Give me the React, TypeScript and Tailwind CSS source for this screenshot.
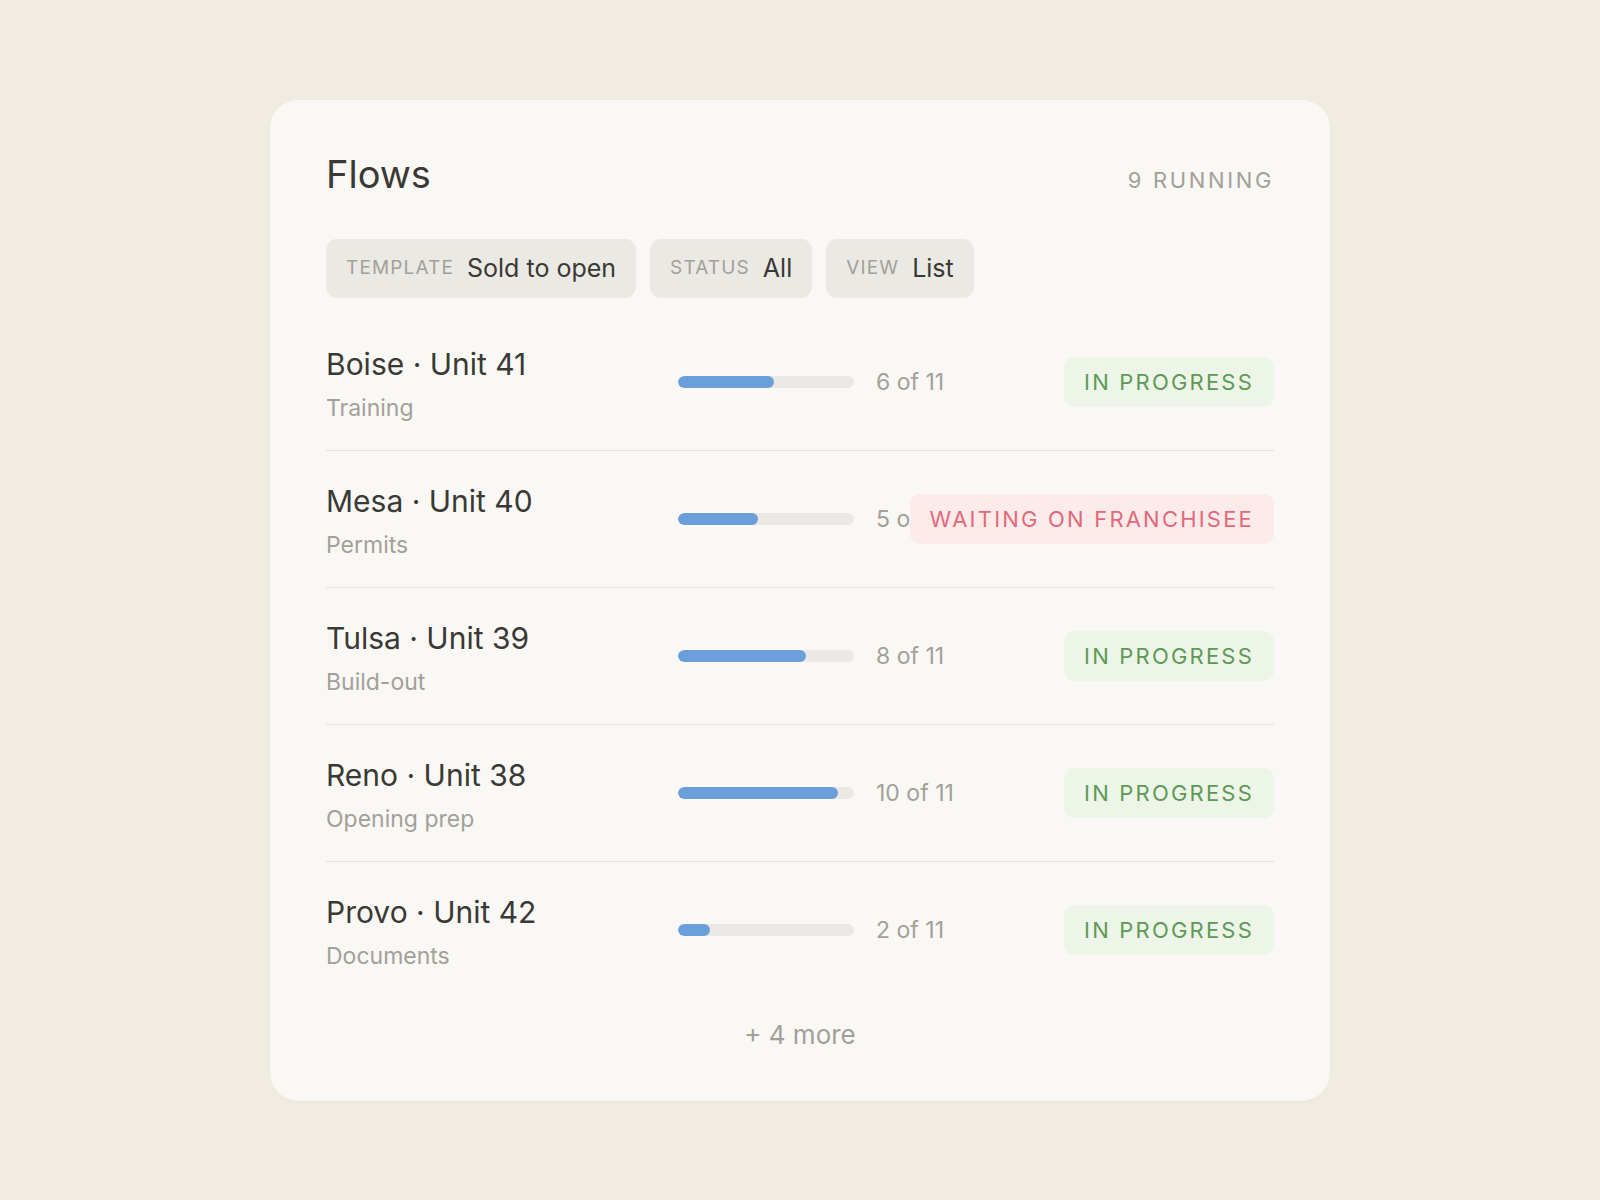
import React from "react";

type Flow = {
  name: string;
  stage: string;
  done: number;
  total: number;
  status: "progress" | "waiting";
};

const flows: Flow[] = [
  { name: "Boise · Unit 41", stage: "Training", done: 6, total: 11, status: "progress" },
  { name: "Mesa · Unit 40", stage: "Permits", done: 5, total: 11, status: "waiting" },
  { name: "Tulsa · Unit 39", stage: "Build-out", done: 8, total: 11, status: "progress" },
  { name: "Reno · Unit 38", stage: "Opening prep", done: 10, total: 11, status: "progress" },
  { name: "Provo · Unit 42", stage: "Documents", done: 2, total: 11, status: "progress" },
];

function FilterPill({ label, value }: { label: string; value: string }) {
  return (
    <div className="flex items-center gap-[13px] h-[59px] px-[20px] rounded-[11px] bg-[#ebe9e4]">
      <span className="text-[19px] tracking-[0.06em] text-[#a3a09a]">{label}</span>
      <span className="text-[25px] text-[#3a3935]">{value}</span>
    </div>
  );
}

function StatusBadge({ status }: { status: Flow["status"] }) {
  if (status === "waiting") {
    return (
      <span className="flex items-center h-[50px] px-[20px] rounded-[10px] bg-[#fdebea] text-[22px] tracking-[0.1em] text-[#e06a7c] whitespace-nowrap">
        WAITING ON FRANCHISEE
      </span>
    );
  }
  return (
    <span className="flex items-center h-[50px] px-[20px] rounded-[10px] bg-[#edf5e9] text-[22px] tracking-[0.1em] text-[#5e9a55] whitespace-nowrap">
      IN PROGRESS
    </span>
  );
}

function FlowRow({ flow, last }: { flow: Flow; last: boolean }) {
  const pct = (flow.done / flow.total) * 100;
  return (
    <div
      className={
        "flex items-center py-[29px] " + (last ? "" : "border-b border-[#e6e4df]")
      }
    >
      <div className="w-[352px] shrink-0 mt-[3px] -mb-[3px]">
        <div className="text-[30px] leading-[36px] text-[#3a3935]">{flow.name}</div>
        <div className="mt-[10px] text-[23px] leading-[32px] text-[#a3a09a]">{flow.stage}</div>
      </div>
      <div className="w-[176px] h-[12px] shrink-0 rounded-full bg-[#ebe9e5] overflow-hidden">
        <div className="h-full rounded-full bg-[#6b9fdc]" style={{ width: `${pct}%` }} />
      </div>
      <div className="ml-[22px] w-[150px] shrink-0 text-[23px] text-[#a3a09a] whitespace-nowrap">
        {flow.done} of {flow.total}
      </div>
      <div className="flex-1 flex justify-end min-w-0">
        <StatusBadge status={flow.status} />
      </div>
    </div>
  );
}

export default function App() {
  return (
    <div
      className="min-h-screen bg-[#f1ece1] pt-[100px]"
      style={{ fontFamily: "Inter, 'Liberation Sans', sans-serif" }}
    >
      <div className="w-[1060px] mx-auto rounded-[28px] bg-[#f9f8f4] shadow-[0_1px_3px_rgba(120,100,60,0.06)] px-[56px] pt-[51px] pb-[50px]">
        <div className="flex items-baseline justify-between">
          <h1 className="text-[38px] leading-[46px] text-[#3a3935]">Flows</h1>
          <span className="text-[22px] tracking-[0.12em] text-[#a3a09a]">9 RUNNING</span>
        </div>

        <div className="flex gap-[14px] mt-[42px]">
          <FilterPill label="TEMPLATE" value="Sold to open" />
          <FilterPill label="STATUS" value="All" />
          <FilterPill label="VIEW" value="List" />
        </div>

        <div className="mt-[16px]">
          {flows.map((f, i) => (
            <FlowRow key={f.name} flow={f} last={i === flows.length - 1} />
          ))}
        </div>

        <div className="mt-[21px] text-center text-[26px] leading-[32px] text-[#a3a09a]">
          + 4 more
        </div>
      </div>
    </div>
  );
}
